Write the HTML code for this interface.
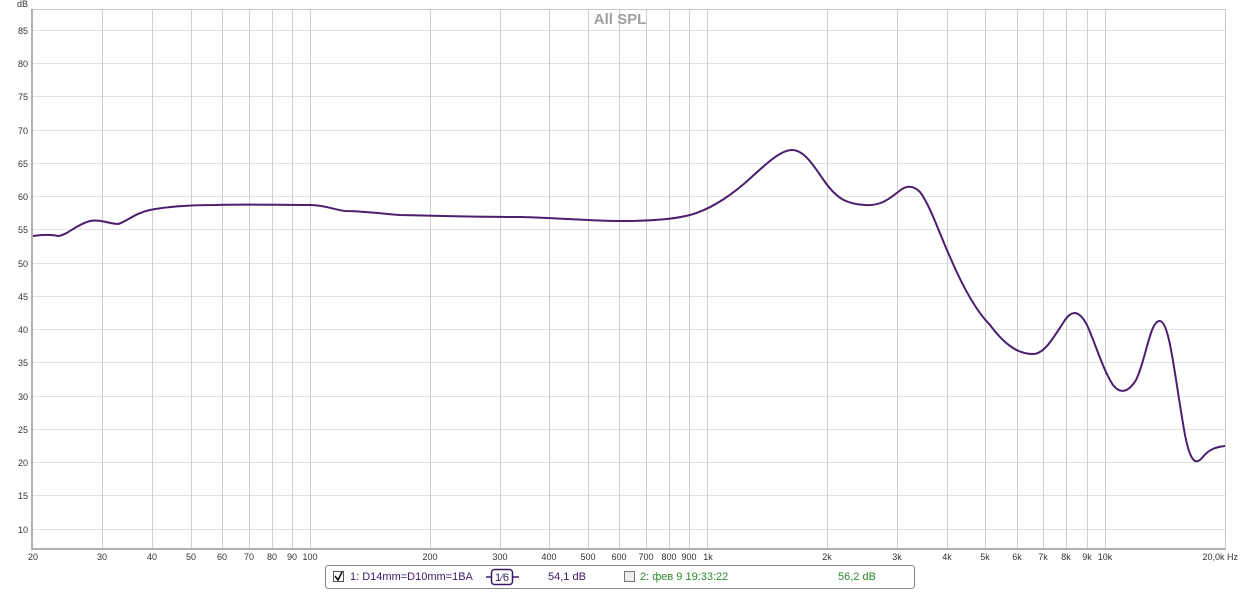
<!DOCTYPE html>
<html><head><meta charset="utf-8"><style>
body{margin:0;background:#fff;width:1240px;height:591px;overflow:hidden;font-family:"Liberation Sans",sans-serif}
svg text{font-family:"Liberation Sans",sans-serif}
</style></head><body>
<svg width="1240" height="591" xmlns="http://www.w3.org/2000/svg">
<g stroke="#e2e2e2" stroke-width="1">
<line x1="33" x2="1225" y1="30.5" y2="30.5"/><line x1="33" x2="1225" y1="63.5" y2="63.5"/><line x1="33" x2="1225" y1="96.5" y2="96.5"/><line x1="33" x2="1225" y1="130.5" y2="130.5"/><line x1="33" x2="1225" y1="163.5" y2="163.5"/><line x1="33" x2="1225" y1="196.5" y2="196.5"/><line x1="33" x2="1225" y1="229.5" y2="229.5"/><line x1="33" x2="1225" y1="263.5" y2="263.5"/><line x1="33" x2="1225" y1="296.5" y2="296.5"/><line x1="33" x2="1225" y1="329.5" y2="329.5"/><line x1="33" x2="1225" y1="362.5" y2="362.5"/><line x1="33" x2="1225" y1="396.5" y2="396.5"/><line x1="33" x2="1225" y1="429.5" y2="429.5"/><line x1="33" x2="1225" y1="462.5" y2="462.5"/><line x1="33" x2="1225" y1="495.5" y2="495.5"/><line x1="33" x2="1225" y1="529.5" y2="529.5"/>
</g>
<g stroke="#cfcfcf" stroke-width="1">
<line x1="102.5" x2="102.5" y1="10" y2="548"/><line x1="152.5" x2="152.5" y1="10" y2="548"/><line x1="191.5" x2="191.5" y1="10" y2="548"/><line x1="222.5" x2="222.5" y1="10" y2="548"/><line x1="249.5" x2="249.5" y1="10" y2="548"/><line x1="272.5" x2="272.5" y1="10" y2="548"/><line x1="292.5" x2="292.5" y1="10" y2="548"/><line x1="310.5" x2="310.5" y1="10" y2="548"/><line x1="430.5" x2="430.5" y1="10" y2="548"/><line x1="500.5" x2="500.5" y1="10" y2="548"/><line x1="549.5" x2="549.5" y1="10" y2="548"/><line x1="588.5" x2="588.5" y1="10" y2="548"/><line x1="619.5" x2="619.5" y1="10" y2="548"/><line x1="646.5" x2="646.5" y1="10" y2="548"/><line x1="669.5" x2="669.5" y1="10" y2="548"/><line x1="689.5" x2="689.5" y1="10" y2="548"/><line x1="707.5" x2="707.5" y1="10" y2="548"/><line x1="827.5" x2="827.5" y1="10" y2="548"/><line x1="897.5" x2="897.5" y1="10" y2="548"/><line x1="947.5" x2="947.5" y1="10" y2="548"/><line x1="985.5" x2="985.5" y1="10" y2="548"/><line x1="1017.5" x2="1017.5" y1="10" y2="548"/><line x1="1043.5" x2="1043.5" y1="10" y2="548"/><line x1="1066.5" x2="1066.5" y1="10" y2="548"/><line x1="1087.5" x2="1087.5" y1="10" y2="548"/><line x1="1105.5" x2="1105.5" y1="10" y2="548"/>
</g>
<rect x="32.5" y="9.5" width="1193" height="539" fill="none" stroke="#c8c8c8" stroke-width="1"/>
<line x1="32" x2="32" y1="9" y2="550" stroke="#b0b0b0" stroke-width="2"/>
<line x1="31" x2="1226" y1="549" y2="549" stroke="#b0b0b0" stroke-width="2"/>
<text x="620" y="24" font-size="15" font-weight="bold" fill="#a0a0a0" text-anchor="middle">All SPL</text>
<g font-size="9" fill="#333" text-anchor="end">
<text x="28" y="7">dB</text>
<text x="28" y="34">85</text><text x="28" y="67">80</text><text x="28" y="100">75</text><text x="28" y="134">70</text><text x="28" y="167">65</text><text x="28" y="200">60</text><text x="28" y="233">55</text><text x="28" y="267">50</text><text x="28" y="300">45</text><text x="28" y="333">40</text><text x="28" y="366">35</text><text x="28" y="400">30</text><text x="28" y="433">25</text><text x="28" y="466">20</text><text x="28" y="499">15</text><text x="28" y="533">10</text>
</g>
<g font-size="9" fill="#333" text-anchor="middle">
<text x="33" y="560">20</text><text x="102" y="560">30</text><text x="152" y="560">40</text><text x="191" y="560">50</text><text x="222" y="560">60</text><text x="249" y="560">70</text><text x="272" y="560">80</text><text x="292" y="560">90</text><text x="310" y="560">100</text><text x="430" y="560">200</text><text x="500" y="560">300</text><text x="549" y="560">400</text><text x="588" y="560">500</text><text x="619" y="560">600</text><text x="646" y="560">700</text><text x="669" y="560">800</text><text x="689" y="560">900</text><text x="708" y="560">1k</text><text x="827" y="560">2k</text><text x="897" y="560">3k</text><text x="947" y="560">4k</text><text x="985" y="560">5k</text><text x="1017" y="560">6k</text><text x="1043" y="560">7k</text><text x="1066" y="560">8k</text><text x="1087" y="560">9k</text><text x="1105" y="560">10k</text><text x="1238" y="560" text-anchor="end">20,0k Hz</text>
</g>
<path d="M33,236 C40,235 50,234 58,236 C68,235 75,225 90,221 C100,219 110,224 118,224 C126,222 135,213 150,210 C170,206 190,205 215,205 C240,204 280,205 310,205 C325,205 335,210 345,211 C360,211 375,213 400,215 C440,216 480,217 520,217 C560,218 590,221 620,221 C650,221 675,219 690,215 C708,210 725,200 745,183 C765,165 780,150 792,150 C805,150 815,168 825,182 C838,200 848,204 865,205 C880,206 888,200 898,192 C905,186 912,184 920,192 C930,205 940,235 950,257 C962,285 975,310 990,325 C1005,345 1018,354 1033,354 C1045,354 1055,335 1065,320 C1072,310 1079,310 1087,325 C1096,345 1103,370 1113,385 C1120,394 1128,393 1136,380 C1146,360 1150,320 1160,321 C1170,322 1175,380 1185,435 C1190,460 1195,466 1202,458 C1208,450 1215,447 1225,446" fill="none" stroke="#4b1f6e" stroke-width="2"/>
<rect x="325.5" y="565.5" width="589" height="23" rx="3" fill="#fff" stroke="#888"/>
<rect x="333.5" y="571.5" width="10" height="10" fill="#fff" stroke="#555"/>
<path d="M335,576 L338,580 L342,572" fill="none" stroke="#000" stroke-width="1.5"/>
<text x="350" y="580" font-size="11" fill="#3a1a66">1: D14mm=D10mm=1BA</text>
<line x1="486" x2="492" y1="577" y2="577" stroke="#3a1a66" stroke-width="1.5"/>
<line x1="512" x2="519" y1="577" y2="577" stroke="#3a1a66" stroke-width="1.5"/>
<rect x="491.5" y="569.5" width="21" height="15" rx="3" fill="#fff" stroke="#3a1a66" stroke-width="1.5"/>
<text x="502" y="581" font-size="11" fill="#3a1a66" text-anchor="middle">1⁄6</text>
<text x="548" y="580" font-size="11" fill="#3a1a66">54,1 dB</text>
<rect x="624.5" y="571.5" width="10" height="10" fill="#eee" stroke="#777"/>
<text x="640" y="580" font-size="11" fill="#2a8a2a">2: фев 9 19:33:22</text>
<text x="838" y="580" font-size="11" fill="#2a8a2a">56,2 dB</text>
</svg>
</body></html>
